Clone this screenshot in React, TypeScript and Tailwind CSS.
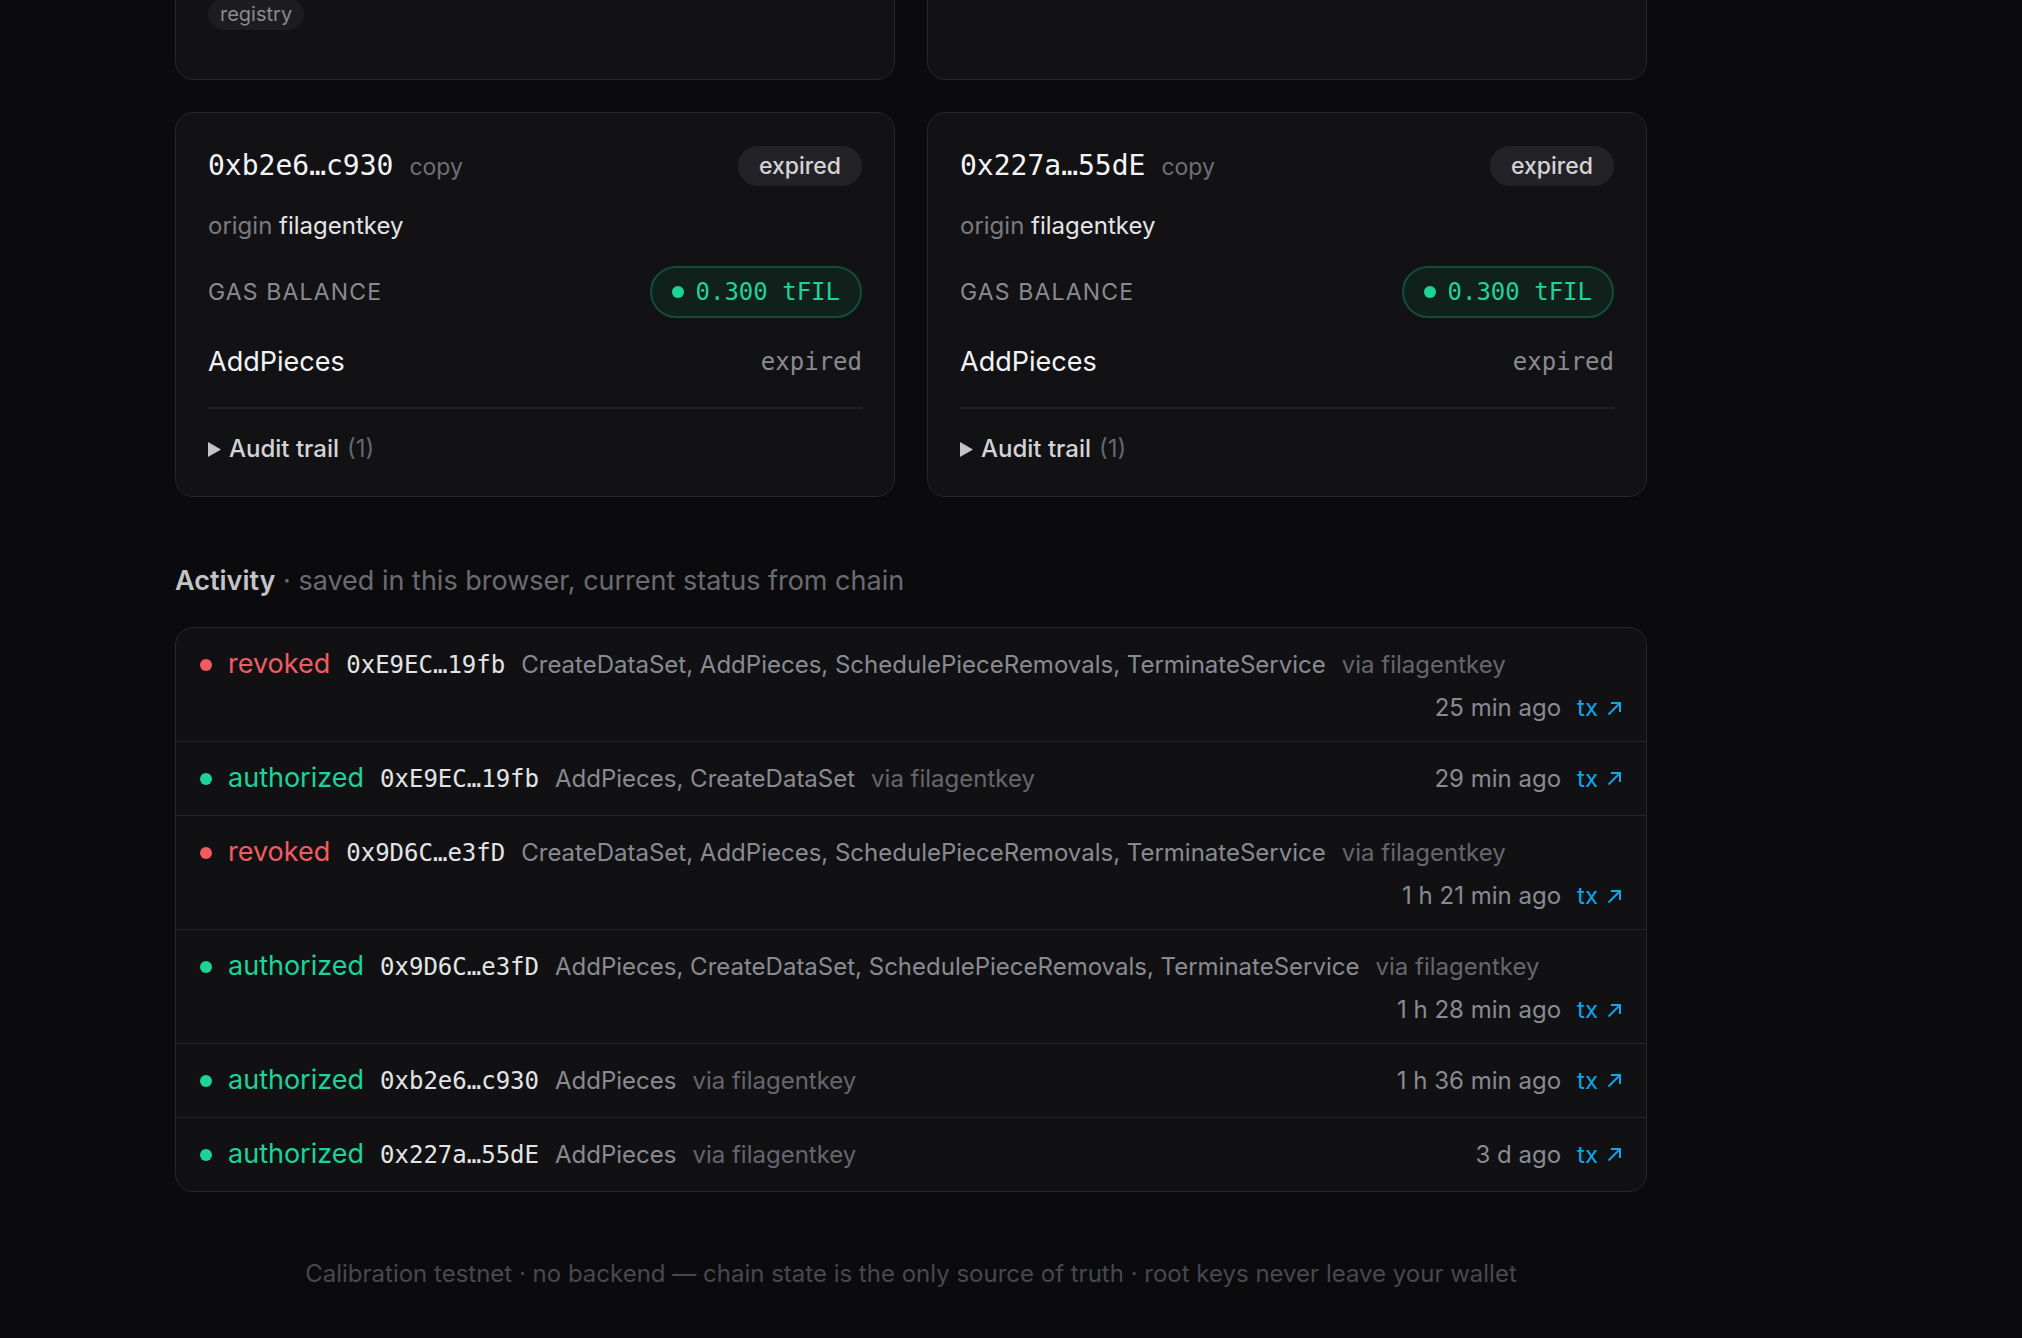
const sans = "font-['Inter','Noto_Sans',sans-serif]";
const mono = "font-['DejaVu_Sans_Mono','Liberation_Mono',monospace]";

type Delegation = {
  address: string;
  origin: string;
  balance: string;
  method: string;
};

type Activity = {
  status: "revoked" | "authorized";
  address: string;
  methods: string;
  via: string;
  when: string;
  wrap?: boolean;
};

const delegations: Delegation[] = [
  { address: "0xb2e6…c930", origin: "filagentkey", balance: "0.300 tFIL", method: "AddPieces" },
  { address: "0x227a…55dE", origin: "filagentkey", balance: "0.300 tFIL", method: "AddPieces" },
];

const activity: Activity[] = [
  {
    status: "revoked",
    address: "0xE9EC…19fb",
    methods: "CreateDataSet, AddPieces, SchedulePieceRemovals, TerminateService",
    via: "filagentkey",
    when: "25 min ago",
    wrap: true,
  },
  {
    status: "authorized",
    address: "0xE9EC…19fb",
    methods: "AddPieces, CreateDataSet",
    via: "filagentkey",
    when: "29 min ago",
  },
  {
    status: "revoked",
    address: "0x9D6C…e3fD",
    methods: "CreateDataSet, AddPieces, SchedulePieceRemovals, TerminateService",
    via: "filagentkey",
    when: "1 h 21 min ago",
    wrap: true,
  },
  {
    status: "authorized",
    address: "0x9D6C…e3fD",
    methods: "AddPieces, CreateDataSet, SchedulePieceRemovals, TerminateService",
    via: "filagentkey",
    when: "1 h 28 min ago",
    wrap: true,
  },
  {
    status: "authorized",
    address: "0xb2e6…c930",
    methods: "AddPieces",
    via: "filagentkey",
    when: "1 h 36 min ago",
  },
  {
    status: "authorized",
    address: "0x227a…55dE",
    methods: "AddPieces",
    via: "filagentkey",
    when: "3 d ago",
  },
];

// the explorer arrow, drawn thin like the ↗ glyph
const ExternalArrow = () => (
  <svg width="15" height="15" viewBox="0 0 15 15" fill="none" stroke="currentColor" strokeWidth="2">
    <path d="M1.5 13.5 L13 2" />
    <path d="M4 2 H13 V11" />
  </svg>
);

const TxLink = ({ when }: { when: string }) => (
  <div className="flex items-center gap-4 leading-[30px]">
    <span className="text-[24px] text-[#8a8a92]">{when}</span>
    <a href="#" className="flex items-center gap-[9px] text-[24px] text-[#0ea5e9]">
      tx
      <ExternalArrow />
    </a>
  </div>
);

const ActivityRow = ({ item }: { item: Activity }) => {
  const revoked = item.status === "revoked";
  return (
    <div className="border-t border-[#232327] px-6 pt-[18px] pb-[18px] first:border-t-0">
      <div className="flex h-[37px] items-center gap-4">
        <span
          className={`h-3 w-3 shrink-0 rounded-full ${revoked ? "bg-[#f25c61]" : "bg-[#1ed397]"}`}
        />
        <span className={`text-[27px] ${revoked ? "text-[#f25c61]" : "text-[#1ed397]"}`}>
          {item.status}
        </span>
        <span className={`${mono} text-[24px] text-[#e4e4e7]`}>{item.address}</span>
        <span className="text-[24px] text-[#8a8a92]">{item.methods}</span>
        <span className="text-[24px] text-[#66666e]">via {item.via}</span>
        {!item.wrap && (
          <div className="ml-auto">
            <TxLink when={item.when} />
          </div>
        )}
      </div>
      {item.wrap && (
        <div className="mt-[10px] flex justify-end">
          <TxLink when={item.when} />
        </div>
      )}
    </div>
  );
};

const DelegationCard = ({ d }: { d: Delegation }) => (
  <div className="flex flex-col gap-6 rounded-[18px] border border-[#27272b] bg-[#121215] px-8 pt-[33px] pb-[31px]">
    <div className="flex h-10 items-center justify-between">
      <div className="flex items-baseline gap-4">
        <span className={`${mono} text-[28px] font-medium text-[#f4f4f5]`}>{d.address}</span>
        <button className="text-[23px] text-[#6e6e76]">copy</button>
      </div>
      <span className="flex h-10 items-center rounded-full bg-[#232327] px-[21px] text-[23px] font-medium text-[#d4d4d8]">
        expired
      </span>
    </div>
    <div className="text-[24px] leading-8">
      <span className="text-[#7a7a82]">origin </span>
      <span className="text-[#e4e4e7]">{d.origin}</span>
    </div>
    <div className="flex items-center justify-between">
      <span className="text-[23px] uppercase tracking-wider text-[#8a8a92]">Gas balance</span>
      <span className="flex h-[52px] items-center gap-3 rounded-full border-2 border-[#134d39] bg-[#10201b] px-5">
        <span className="h-3 w-3 rounded-full bg-[#1ed397]" />
        <span className={`${mono} text-[24px] text-[#1ed397]`}>{d.balance}</span>
      </span>
    </div>
    <div className="flex h-10 items-center justify-between">
      <span className="text-[27px] text-[#f4f4f5]">{d.method}</span>
      <span className={`${mono} text-[24px] text-[#8a8a92]`}>expired</span>
    </div>
    <div className="mt-[1px] border-t-2 border-[#222226] pt-6">
      <div className="flex items-center gap-[8px] text-[24px] leading-[32px]">
        <svg width="13" height="15" viewBox="0 0 13 15" className="text-[#c4c4c8]">
          <path d="M0 0 L13 7.5 L0 15 Z" fill="currentColor" />
        </svg>
        <span className="font-medium text-[#d4d4d8]">Audit trail</span>
        <span className="text-[#66666e]">(1)</span>
      </div>
    </div>
  </div>
);

export default function App() {
  return (
    <div className={`${sans} min-h-[1338px] overflow-hidden bg-[#0b0b0d]`}>
      <main className="-mt-[121px] ml-[175px] flex w-[1472px] flex-col">
        <div className="grid grid-cols-2 gap-8">
          {[0, 1].map((i) => (
            <div
              key={i}
              className="flex h-[201px] flex-col justify-end rounded-[18px] border border-[#27272b] bg-[#121215] px-8 pb-[49px]"
            >
              {i === 0 && (
                <span className="w-fit rounded-full bg-[#1d1d21] px-3 text-[20px] leading-[32px] text-[#8a8a92]">
                  registry
                </span>
              )}
            </div>
          ))}
        </div>

        <div className="mt-8 grid grid-cols-2 gap-8">
          {delegations.map((d) => (
            <DelegationCard key={d.address} d={d} />
          ))}
        </div>

        <h2 className="mt-[68px] text-[27px] leading-8">
          <span className="font-semibold text-[#c4c4c8]">Activity</span>
          <span className="text-[#6b6b73]"> · saved in this browser, current status from chain</span>
        </h2>

        <div className="mt-[30px] overflow-hidden rounded-[18px] border border-[#27272b] bg-[#111114]">
          {activity.map((a, i) => (
            <ActivityRow key={i} item={a} />
          ))}
        </div>

        <footer className="mt-[70px] text-center text-[24px] leading-6 text-[#48484f]">
          Calibration testnet · no backend — chain state is the only source of truth · root keys never
          leave your wallet
        </footer>
      </main>
    </div>
  );
}
